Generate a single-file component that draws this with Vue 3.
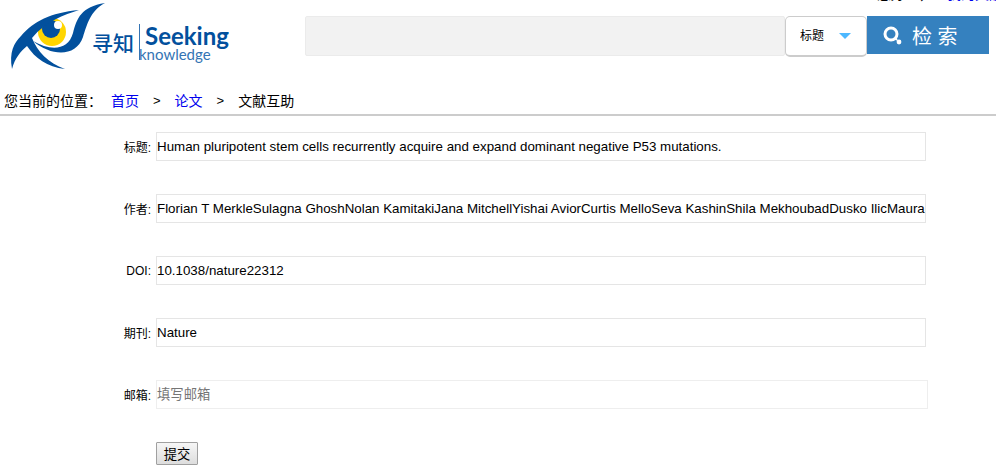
<script setup>
import { ref } from "vue";

const fields = ref([
  {
    id: "title",
    label: "标题",
    value:
      "Human pluripotent stem cells recurrently acquire and expand dominant negative P53 mutations.",
  },
  {
    id: "author",
    label: "作者",
    value:
      "Florian T MerkleSulagna GhoshNolan KamitakiJana MitchellYishai AviorCurtis MelloSeva KashinShila MekhoubadDusko IlicMaura",
  },
  { id: "doi", label: "DOI", value: "10.1038/nature22312" },
  { id: "journal", label: "期刊", value: "Nature" },
  { id: "email", label: "邮箱", value: "", placeholder: "填写邮箱" },
]);
const keyword = ref("");
</script>

<template>
  <div class="page">
    <div class="userBar">
      <span>您好</span>
      <span>，</span>
      <a href="#">我的文献</a>
    </div>

    <header class="header">
      <a class="logo" href="#" aria-label="寻知 Seeking knowledge">
        <svg width="236" height="72" viewBox="0 0 236 72">
          <circle cx="52" cy="32" r="14" fill="#ffd500" />
          <circle cx="51" cy="29" r="9" fill="#02509d" />
          <circle cx="58" cy="25" r="4" fill="#fff" />
          <path
            d="M12 69C9 52 14 43 21 36C34 21 50 13 79 10C64 15 46 21 32 38C37 51 48 63 65 69C47 67 35 58 27 46C20 52 15 58 12 69Z"
            fill="#02509d"
          />
          <path
            d="M33 41C50 51 68 51 73 33C77 18 81 7 105 3C90 11 87 25 83 37C76 57 52 57 33 41Z"
            fill="#02509d"
          />
          <text class="logoName" x="92" y="51">寻知</text>
          <path d="M139.5 24V60" stroke="#3474b4" />
          <text class="logoSeeking" x="145" y="45">Seeking</text>
          <text class="logoKnowledge" x="139" y="60">knowledge</text>
        </svg>
      </a>
      <form class="search" @submit.prevent>
        <input v-model="keyword" class="keyword" type="text" aria-label="检索词" />
        <div class="kind">
          <select aria-label="检索字段">
            <option>标题</option>
            <option>作者</option>
            <option>DOI</option>
          </select>
          <svg class="arrow" width="12" height="6" viewBox="0 0 12 6">
            <path d="M0 0H12L6 6Z" fill="#4db8ff" />
          </svg>
        </div>
        <button class="searchButton" type="submit">
          <svg width="20" height="20" viewBox="0 0 20 20">
            <circle cx="8" cy="9" r="6" fill="none" stroke="#fff" stroke-width="3" />
            <path d="M12 13L14 15" stroke="#fff" stroke-width="2" />
            <circle cx="16" cy="17" r="2.4" fill="#fff" />
          </svg>
          <span>检 索</span>
        </button>
      </form>
    </header>

    <nav class="crumbs">
      <span>您当前的位置：</span>
      <a href="#">首页</a>
      <span class="sep">&gt;</span>
      <a href="#">论文</a>
      <span class="sep">&gt;</span>
      <span>文献互助</span>
    </nav>

    <form class="helpForm" @submit.prevent>
      <div v-for="field in fields" :key="field.id" class="row">
        <label :for="field.id">{{ field.label }}:</label>
        <input
          :id="field.id"
          v-model="field.value"
          :class="{ email: field.id === 'email' }"
          type="text"
          :placeholder="field.placeholder"
        />
      </div>
      <button class="submit" type="submit">提交</button>
    </form>
  </div>
</template>

<style>
body {
  margin: 0;
  background: #fff;
}
</style>

<style scoped>
.page {
  font-family: "Liberation Sans", "Noto Sans CJK SC", sans-serif;
  font-size: 14px;
  color: #000;
}
.page * {
  box-sizing: border-box;
}
a {
  color: #0000ee;
  text-decoration: none;
}

.userBar {
  display: flex;
  justify-content: flex-end;
  align-items: flex-end;
  gap: 14px;
  height: 2px;
  line-height: 16px;
  overflow: hidden;
}
.userBar a {
  margin-right: -7px;
}

.header {
  display: flex;
  align-items: flex-start;
  height: 86px;
  padding-right: 7px;
}
.logo {
  flex: none;
  width: 305px;
  margin-top: -2px;
}
.logo svg {
  display: block;
}
.logo text {
  fill: #02509d;
}
.logoName {
  font-size: 21px;
  font-weight: 500;
}
.logo .logoSeeking {
  font-family: Lato, sans-serif;
  font-size: 24px;
  font-weight: 700;
}
.logo .logoKnowledge {
  font-family: Lato, sans-serif;
  font-size: 15px;
  fill: #3474b4;
}

.search {
  display: flex;
  flex: 1;
  align-items: flex-start;
  padding-top: 14px;
}
.keyword {
  flex: 1;
  min-width: 0;
  height: 40px;
  border: 1px solid #ebebeb;
  border-radius: 2px;
  background: #f2f2f2;
}
.kind {
  position: relative;
  width: 82px;
  height: 41px;
  border: 1px solid #ccc;
  border-bottom-width: 2px;
  border-radius: 5px;
}
.kind select {
  width: 100%;
  height: 100%;
  padding: 0 14px;
  border: 0;
  background: none;
  appearance: none;
  font-family: inherit;
  font-size: 12px;
  color: #000;
}
.arrow {
  position: absolute;
  top: 16px;
  right: 15px;
  pointer-events: none;
}
.searchButton {
  display: flex;
  align-items: center;
  gap: 9px;
  width: 122px;
  height: 38px;
  padding: 0 16px;
  border: 0;
  background: #3581bf;
  color: #fff;
  font-family: inherit;
  font-size: 20px;
}

.crumbs {
  display: flex;
  align-items: center;
  height: 28px;
  padding: 0 4px 2px;
  border-bottom: 2px solid #ccc;
}
.crumbs a:first-of-type {
  margin-left: 9px;
}
.sep {
  margin: 0 14px;
  font-size: 13px;
}

.helpForm {
  padding: 16px 68px 0 0;
}
.row {
  display: flex;
  align-items: center;
  height: 29px;
  margin-bottom: 33px;
}
.row label {
  width: 151px;
  margin-right: 5px;
  text-align: right;
  font-size: 12px;
}
.row input {
  flex: 1;
  min-width: 0;
  height: 29px;
  margin-right: 2px;
  padding: 0;
  border: 1px solid #e5e5e5;
  font-family: inherit;
  color: #000;
}
.row .email {
  margin-right: 0;
  border-color: #eee;
}
.row input::placeholder {
  color: #757575;
}
.submit {
  display: block;
  width: 42px;
  height: 23px;
  margin-left: 156px;
  padding: 0;
  border: 1px solid #a0a0a0;
  border-radius: 1px;
  background: linear-gradient(#f6f6f6, #ddd);
  color: #000;
  font-family: inherit;
}
</style>
